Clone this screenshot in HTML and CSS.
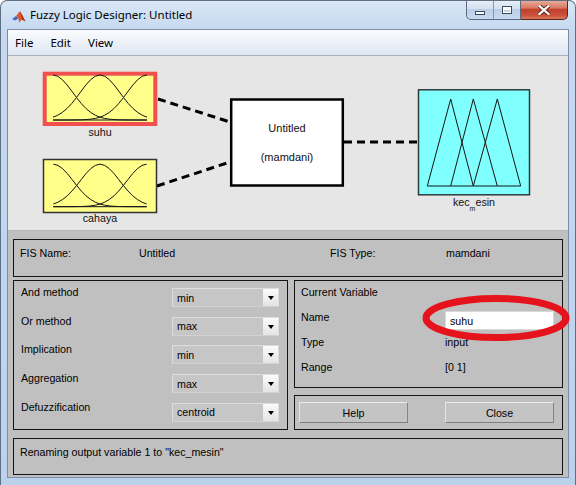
FILE: index.html
```html
<!DOCTYPE html>
<html>
<head>
<meta charset="utf-8">
<title>Fuzzy Logic Designer: Untitled</title>
<link rel="stylesheet" href="styles.css">
</head>
<body>
<div class="window">
  <div class="titlebar">
    <svg class="appicon" width="14" height="13" viewBox="0 0 14 13">
      <path d="M0 9 L4 6 L6.5 8.5 L3 10.5 Z" fill="#3b6fc2"/>
      <path d="M4 6 L8 1 L13.5 11.5 L10 9.5 L7 12.5 L6.5 8.5 Z" fill="#e2562a"/>
      <path d="M8 1 L10 9.5 L13.5 11.5 Z" fill="#a8321a"/>
    </svg>
    <span class="title">Fuzzy Logic Designer: Untitled</span>
    <div class="controls">
      <div class="minmax">
        <span class="cbtn min"><i></i></span>
        <span class="cbtn max"><i></i></span>
      </div>
      <span class="cbtn close">
        <svg width="12" height="10" viewBox="0 0 12 10">
          <path d="M1.5 1 L10.5 9 M10.5 1 L1.5 9" stroke="#5b2117" stroke-width="4" stroke-linecap="square"/>
          <path d="M1.5 1 L10.5 9 M10.5 1 L1.5 9" stroke="#ffffff" stroke-width="2.2" stroke-linecap="square"/>
        </svg>
      </span>
    </div>
  </div>

  <div class="client">
    <div class="menubar">
      <span class="menu">File</span>
      <span class="menu">Edit</span>
      <span class="menu">View</span>
    </div>

    <div class="diagram">
      <svg width="560" height="175" viewBox="8 56 560 175">
        <defs>
          <g id="gauss" fill="none" stroke="#141414" stroke-width="1">
            <polyline vector-effect="non-scaling-stroke" points="0,1 .05,.9727 .1,.895 .15,.7791 .2,.6416 .25,.5 .3,.3684 .35,.2569 .4,.1695 .45,.1058 .5,.0624 .55,.0349 .6,.0184 .65,.0092 .7,.0044 .75,.0019 .8,.0008 .9,0 1,0"/>
            <polyline vector-effect="non-scaling-stroke" points="0,.0624 .05,.1058 .1,.1695 .15,.2569 .2,.3684 .25,.5 .3,.6416 .35,.7791 .4,.895 .45,.9727 .5,1 .55,.9727 .6,.895 .65,.7791 .7,.6416 .75,.5 .8,.3684 .85,.2569 .9,.1695 .95,.1058 1,.0624"/>
            <polyline vector-effect="non-scaling-stroke" points="0,0 .1,0 .2,.0008 .25,.0019 .3,.0044 .35,.0092 .4,.0184 .45,.0349 .5,.0624 .55,.1058 .6,.1695 .65,.2569 .7,.3684 .75,.5 .8,.6416 .85,.7791 .9,.895 .95,.9727 1,1"/>
            <line vector-effect="non-scaling-stroke" x1="0" y1="0" x2="1" y2="0"/>
          </g>
        </defs>

        <!-- connections -->
        <g stroke="#000" stroke-width="3" stroke-dasharray="8 5" fill="none">
          <line x1="158" y1="99" x2="230" y2="122"/>
          <line x1="157" y1="186" x2="230" y2="162"/>
          <line x1="344" y1="142" x2="418" y2="142"/>
        </g>

        <!-- input suhu (selected) -->
        <rect x="44.7" y="73.7" width="110.6" height="50.3" fill="#ffff8a" stroke="#f0504e" stroke-width="4"/>
        <use href="#gauss" transform="translate(53,120) scale(94,-45)"/>
        <text class="lbl" x="100" y="136" text-anchor="middle">suhu</text>

        <!-- input cahaya -->
        <rect x="43.5" y="159.5" width="113" height="53" fill="#ffff8a" stroke="#333" stroke-width="1.5"/>
        <use href="#gauss" transform="translate(53.3,206.7) scale(93.4,-42.5)"/>
        <text class="lbl" x="100" y="222" text-anchor="middle">cahaya</text>

        <!-- system -->
        <rect x="231.2" y="99.5" width="111.6" height="86" fill="#ffffff" stroke="#000" stroke-width="2.5"/>
        <text class="lbl big" x="287" y="131.5" text-anchor="middle">Untitled</text>
        <text class="lbl big" x="287" y="160.5" text-anchor="middle">(mamdani)</text>

        <!-- output -->
        <rect x="418.5" y="89.8" width="111" height="105" fill="#80ffff" stroke="#2c3b3b" stroke-width="1.5"/>
        <g fill="none" stroke="#141414" stroke-width="1">
          <polyline points="427.3,186 450.7,99 473.3,186"/>
          <polyline points="450.7,186 473.3,99 497.3,186"/>
          <polyline points="473.3,186 497.3,99 520.7,186"/>
          <line x1="427.3" y1="186" x2="520.7" y2="186"/>
        </g>
        <text class="lbl" x="474" y="206" text-anchor="middle">kec<tspan font-size="7" dy="5">m</tspan><tspan dy="-5">esin</tspan></text>
      </svg>
    </div>

    <div class="lower">
      <div class="panel fis">
        <span class="c1">FIS Name:</span>
        <span class="c2">Untitled</span>
        <span class="c3">FIS Type:</span>
        <span class="c4">mamdani</span>
      </div>

      <div class="mid">
        <div class="panel methods">
          <span class="mlabel">And method</span>
          <div class="dropdown"><span>min</span><b class="arrow"><i></i></b></div>
          <span class="mlabel">Or method</span>
          <div class="dropdown"><span>max</span><b class="arrow"><i></i></b></div>
          <span class="mlabel">Implication</span>
          <div class="dropdown"><span>min</span><b class="arrow"><i></i></b></div>
          <span class="mlabel">Aggregation</span>
          <div class="dropdown"><span>max</span><b class="arrow"><i></i></b></div>
          <span class="mlabel">Defuzzification</span>
          <div class="dropdown"><span>centroid</span><b class="arrow"><i></i></b></div>
        </div>

        <div class="rightcol">
          <div class="panel curvar">
            <span class="vlabel">Current Variable</span>
            <span></span>
            <span class="vlabel">Name</span>
            <div class="textbox">suhu</div>
            <span class="vlabel">Type</span>
            <span class="vlabel">input</span>
            <span class="vlabel">Range</span>
            <span class="vlabel">[0 1]</span>
          </div>
          <div class="panel buttons">
            <div class="button">Help</div>
            <div class="button">Close</div>
          </div>
        </div>
      </div>

      <div class="panel status">Renaming output variable 1 to "kec_mesin"</div>
    </div>
  </div>

  <svg class="annotation" width="152" height="52" viewBox="0 0 152 52">
    <ellipse cx="76" cy="26" rx="70" ry="19.5" fill="none" stroke="#e5141c" stroke-width="7"/>
  </svg>
</div>
</body>
</html>
```

FILE: styles.css
```css
* { box-sizing: border-box; }

html, body {
  margin: 0;
  padding: 0;
  background: #ffffff;
}

.window {
  position: relative;
  width: 576px;
  height: 485px;
  display: flex;
  flex-direction: column;
  background: linear-gradient(#d9e7f7 0px, #c6d9f0 28px, #bcd2ec 100%);
  border: 1px solid #5f6f82;
  border-bottom: none;
  border-radius: 7px 7px 0 0;
  overflow: hidden;
  font-family: "Liberation Sans", Arial, sans-serif;
}

/* ---------- title bar ---------- */
.titlebar {
  height: 28px;
  display: flex;
  align-items: flex-start;
  flex: none;
}

.appicon {
  margin: 9px 0 0 11px;
  flex: none;
}

.title {
  margin: 6px 0 0 4px;
  font-family: "Noto Sans", "Open Sans", sans-serif;
  font-size: 11.5px;
  color: #000;
  line-height: 16px;
}

.controls {
  margin-left: auto;
  margin-right: 7px;
  margin-top: -1px;
  display: flex;
  height: 20px;
}

.minmax {
  display: flex;
  border: 1px solid #5c6b80;
  border-top: none;
  border-radius: 0 0 0 5px;
  overflow: hidden;
  background: linear-gradient(#e9f0f8 0%, #d4e1f0 45%, #bccfe6 50%, #c9dbf0 100%);
}

.cbtn {
  display: flex;
  align-items: center;
  justify-content: center;
  height: 100%;
}

.min { width: 27px; border-right: 1px solid #8797ab; }
.max { width: 26px; }

.min i {
  display: block;
  width: 10px;
  height: 4px;
  margin-top: 6px;
  background: #fff;
  border: 1px solid #3b4a5d;
}

.max i {
  display: block;
  width: 10px;
  height: 8px;
  margin-top: 1px;
  border: 1px solid #3b4a5d;
  background: #c9d6e6;
  box-shadow: inset 0 0 0 1px #fff, inset 0 2px 0 1px #fff;
}

.close {
  width: 47px;
  border: 1px solid #5e2419;
  border-top: none;
  border-left: none;
  border-radius: 0 0 5px 0;
  background: linear-gradient(#eab0a2 0%, #d97862 42%, #c2412a 50%, #c9503a 80%, #dc7a5c 100%);
}

/* ---------- client ---------- */
.client {
  flex: none;
  margin: 0 6px;
  width: 562px;
  height: 449px;
  border: 1px solid #7c8ea5;
  display: flex;
  flex-direction: column;
  background: #c0c0c0;
}

.menubar {
  flex: none;
  height: 26px;
  display: flex;
  align-items: center;
  background: linear-gradient(#fbfcfe 0%, #eef2f8 45%, #dfe6f1 100%);
  border-bottom: 1px solid #a7b0bd;
  font-family: "Noto Sans", "Open Sans", sans-serif;
  font-size: 11.5px;
  color: #000;
  padding-left: 7px;
  gap: 17px;
}

.menu { line-height: 16px; }

.diagram {
  flex: none;
  height: 175px;
  background: #e6e6e6;
  border-bottom: 1px solid #b8b8b8;
}

.diagram svg { display: block; }

.lbl {
  font-family: "Liberation Sans", Arial, sans-serif;
  font-size: 10.7px;
  fill: #111;
}

.lbl.big { font-size: 11px; }

/* ---------- lower gray area ---------- */
.lower {
  flex: 1;
  display: flex;
  flex-direction: column;
  padding: 8px 5px 0 5px;
  font-size: 10.67px;
  color: #000;
  line-height: 14px;
}

.panel {
  border: 1px solid #141414;
  background: #c0c0c0;
}

.fis {
  height: 38px;
  display: grid;
  grid-template-columns: 119px 191px 116px 1fr;
  padding: 6px 0 0 6px;
  align-items: start;
}

.mid {
  margin-top: 3px;
  height: 150px;
  display: flex;
  gap: 6px;
}

.methods {
  width: 275px;
  display: grid;
  grid-template-columns: 1fr 107px;
  grid-auto-rows: 28.7px;
  padding: 4px 8px 0 7px;
  align-items: start;
}

.dropdown {
  margin-top: 3px;
  height: 19px;
  display: flex;
  align-items: center;
  padding-left: 4px;
  background: #c6c6c6;
  border: 1px solid #dddddd;
  border-bottom-color: #d2d2d2;
}

.arrow {
  margin-left: auto;
  align-self: stretch;
  width: 15px;
  margin: 0 0 0 auto;
  background: linear-gradient(#fbfbfb, #e4e4e4);
  display: flex;
  align-items: center;
  justify-content: center;
}

.arrow i {
  display: block;
  width: 0;
  height: 0;
  border-left: 3.5px solid transparent;
  border-right: 3.5px solid transparent;
  border-top: 4px solid #000;
  margin-top: 1px;
}

.rightcol {
  flex: 1;
  display: flex;
  flex-direction: column;
  gap: 7px;
}

.curvar {
  height: 108px;
  display: grid;
  grid-template-columns: 144px 1fr;
  grid-auto-rows: 25px;
  padding: 4px 0 0 6px;
  align-items: start;
}

.textbox {
  margin-top: 1px;
  width: 109px;
  height: 19px;
  background: #fff;
  border: 1px solid #d8d8d8;
  padding: 2px 0 0 4px;
  line-height: 14px;
}

.buttons {
  flex: 1;
  display: flex;
  gap: 37px;
  padding: 6px 0 0 4px;
  align-items: flex-start;
}

.button {
  width: 109px;
  height: 21px;
  background: #c4c4c4;
  border: 1px solid;
  border-color: #ececec #858585 #7e7e7e #e6e6e6;
  display: flex;
  align-items: center;
  justify-content: center;
}

.status {
  margin-top: 8px;
  height: 37px;
  padding: 6px 0 0 6px;
}

/* ---------- annotation ---------- */
.annotation {
  position: absolute;
  left: 419px;
  top: 291px;
}
```
